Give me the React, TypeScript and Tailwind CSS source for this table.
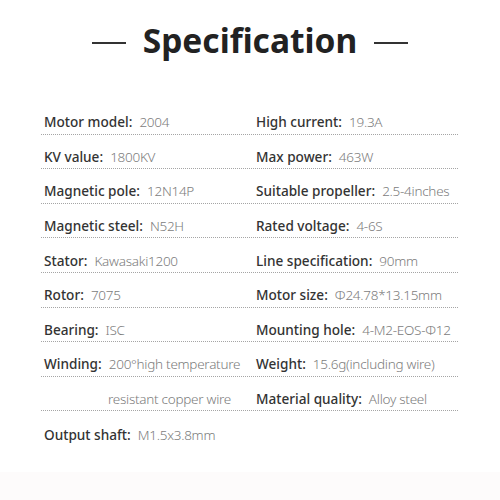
import React from "react";

const rows: [string, string, string, string][] = [
  ["Motor model", "2004", "High current", "19.3A"],
  ["KV value", "1800KV", "Max power", "463W"],
  ["Magnetic pole", "12N14P", "Suitable propeller", "2.5-4inches"],
  ["Magnetic steel", "N52H", "Rated voltage", "4-6S"],
  ["Stator", "Kawasaki1200", "Line specification", "90mm"],
  ["Rotor", "7075", "Motor size", "Φ24.78*13.15mm"],
  ["Bearing", "ISC", "Mounting hole", "4-M2-EOS-Φ12"],
  ["Winding", "200°high temperature", "Weight", "15.6g(including wire)"],
  ["", "resistant copper wire", "Material quality", "Alloy steel"],
];

function Cell({ label, value }: { label: string; value: string }) {
  return (
    <div className="flex items-baseline whitespace-nowrap">
      {label ? (
        <span className="text-[13.6px] font-medium text-[#333] mr-[7px]">{label}:</span>
      ) : (
        <span className="w-[64px]" />
      )}
      <span className="text-[13.5px] font-light text-[#7c7c7c] tracking-[-0.02em]">{value}</span>
    </div>
  );
}

export default function App() {
  return (
    <div
      className="w-[500px] h-[500px] bg-white flex flex-col relative overflow-hidden"
      style={{ fontFamily: '"Noto Sans", "Open Sans", sans-serif' }}
    >
      <div className="flex items-center justify-center h-[86px] pb-[1px]">
        <div className="w-[34px] h-[2px] bg-[#333]" />
        <h1 className="mx-[17px] text-[33.5px] font-bold text-[#222] leading-none pb-[3px]">Specification</h1>
        <div className="w-[34px] h-[2px] bg-[#333]" />
      </div>
      <div className="px-[41px] mt-[14px] pr-[42px]">
        {rows.map((r, i) => (
          <div
            key={i}
            className="grid grid-cols-[215px_1fr] h-[34.6px] items-end pb-[1px] border-b border-dotted border-[#a5a5a5]"
          >
            <div className="pl-[3px]">
              <Cell label={r[0]} value={r[1]} />
            </div>
            <div>
              <Cell label={r[2]} value={r[3]} />
            </div>
          </div>
        ))}
        <div className="grid grid-cols-[215px_1fr] h-[34.6px] items-end pb-[1px]">
          <div className="pl-[3px]">
            <Cell label="Output shaft" value="M1.5x3.8mm" />
          </div>
        </div>
      </div>
      <div className="absolute left-0 right-0 bottom-0 h-[28px] bg-[#fdfbfb]" />
    </div>
  );
}
